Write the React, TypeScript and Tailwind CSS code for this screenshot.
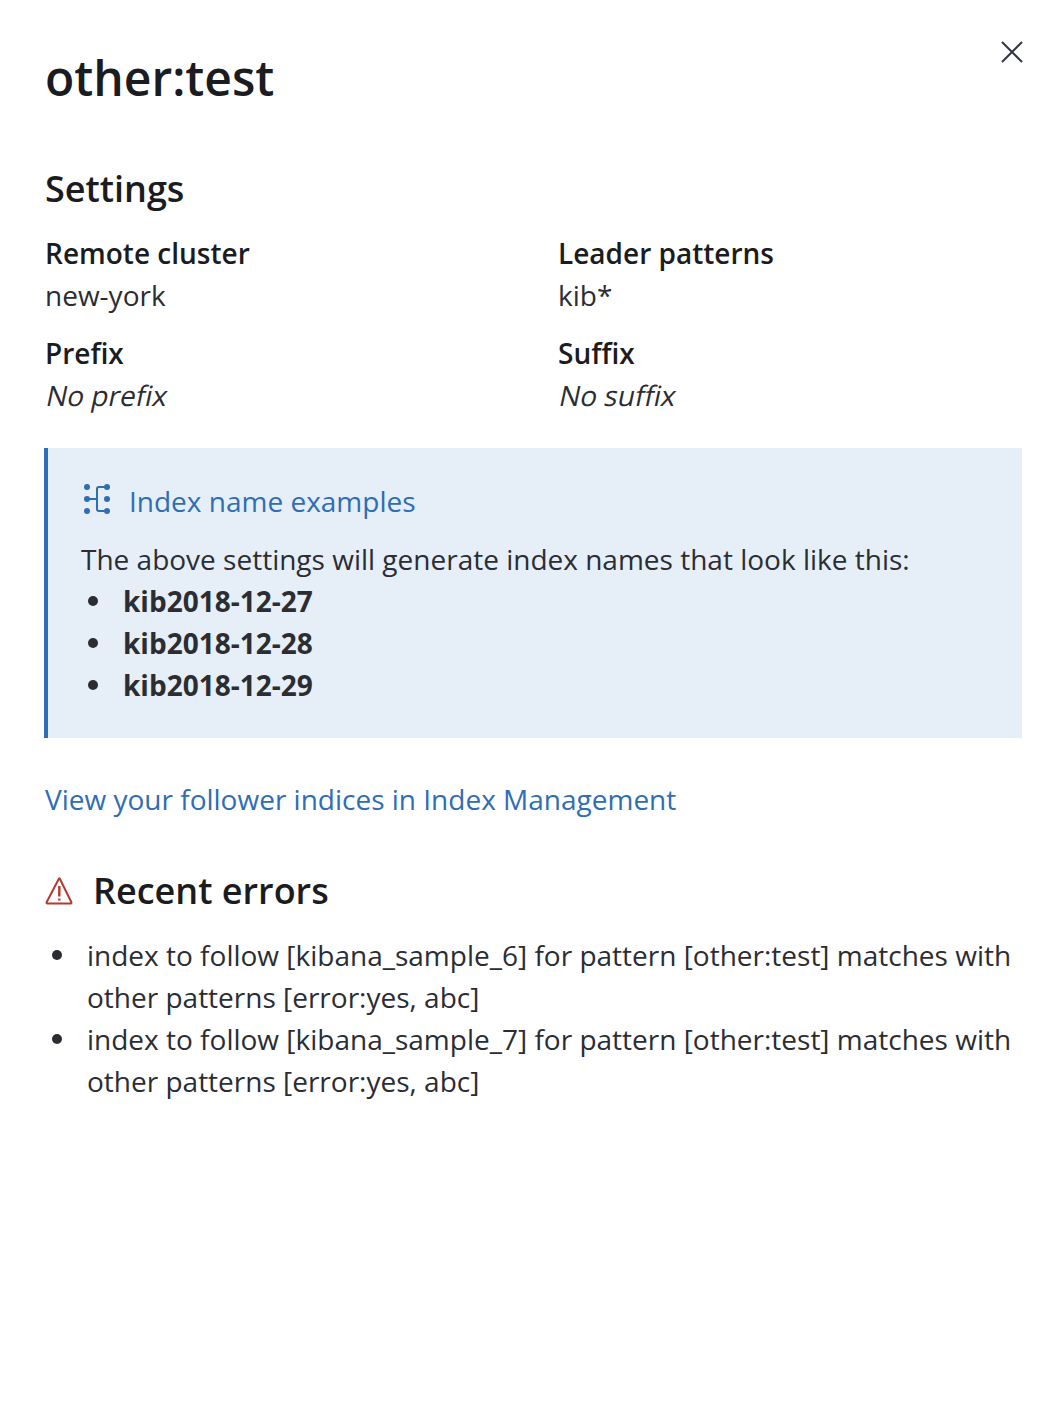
import React from 'react';

const IndexIcon = () => (
  <svg width="32" height="32" viewBox="0 0 32 32" fill="none" className="shrink-0 -translate-y-[2px]">
    <g fill="#2f6db5">
      <circle cx="6" cy="4" r="3" />
      <circle cx="6" cy="16" r="3" />
      <circle cx="6" cy="28" r="3" />
      <circle cx="26" cy="4" r="3" />
      <circle cx="26" cy="16" r="3" />
      <circle cx="26" cy="28" r="3" />
    </g>
    <path d="M6 16h10M26 4h-8a2 2 0 0 0-2 2v20a2 2 0 0 0 2 2h8" stroke="#2f6db5" strokeWidth="2" />
  </svg>
);

const WarningIcon = () => (
  <svg width="30" height="30" viewBox="0 0 30 30" fill="none" className="shrink-0">
    <path d="M14 2.5 1.6 26.2a.8.8 0 0 0 .7 1.2h23.4a.8.8 0 0 0 .7-1.2L14.7 2.5a.4.4 0 0 0-.7 0Z" stroke="#b23a30" strokeWidth="2" strokeLinejoin="round" />
    <path d="M14.3 10v10.5M14.3 22.5v2" stroke="#b23a30" strokeWidth="2.4" />
  </svg>
);

const Field = ({ label, value, empty }: { label: string; value: string; empty?: boolean }) => (
  <div>
    <div className="font-semibold text-[#1a1c21] h-[42px]">{label}</div>
    <div className="h-[42px]">
      {/* the reference slants the upright face, so its width stays upright */}
      {empty ? <span className="ml-[2px] inline-block -skew-x-12">{value}</span> : value}
    </div>
  </div>
);

const Bullet = () => <span className="mt-[16px] h-[10px] w-[10px] shrink-0 rounded-full bg-[#2b2d33]" />;

const errors = ['kibana_sample_6', 'kibana_sample_7'];
const names = ['kib2018-12-27', 'kib2018-12-28', 'kib2018-12-29'];

export default function App() {
  return (
    <div className="relative min-h-[1418px] bg-white pl-[45px] pr-[42px] pt-[43px] text-[28px] leading-[42px] text-[#2b2d33] font-['Open_Sans',sans-serif]">
      <button className="absolute right-[41px] top-[41px] text-[#343741]" aria-label="Close">
        <svg width="22" height="22" viewBox="0 0 22 22" fill="none" className="block">
          <path d="M1 1l20 20M21 1 1 21" stroke="currentColor" strokeWidth="2" />
        </svg>
      </button>

      <h1 className="text-[48px] leading-[70px] font-semibold text-[#1a1c21]">other:test</h1>

      <h2 className="mt-[52px] text-[36px] leading-[48px] font-semibold text-[#1a1c21]">Settings</h2>

      <div className="mt-[19px] grid grid-cols-2 gap-x-[24px] gap-y-[16px] w-[1002px]">
        <Field label="Remote cluster" value="new-york" />
        <Field label="Leader patterns" value="kib*" />
        <Field label="Prefix" value="No prefix" empty />
        <Field label="Suffix" value="No suffix" empty />
      </div>

      <div className="-ml-[1px] mt-[32px] h-[290px] border-l-4 border-[#2f6db5] bg-[#e6eff7] pl-[33px] pt-[32px]">
        <div className="flex items-center gap-[16px] text-[#2f6db5]">
          <IndexIcon />
          <span>Index name examples</span>
        </div>
        <p className="mt-[16px]">The above settings will generate index names that look like this:</p>
        <ul className="pl-[7px] font-bold">
          {names.map((name) => (
            <li key={name} className="flex gap-[25px]">
              <Bullet />
              <span>{name}</span>
            </li>
          ))}
        </ul>
      </div>

      <a href="#" className="mt-[40px] block text-[#2f6db5]">View your follower indices in Index Management</a>

      <div className="mt-[47px] flex items-center gap-[18px]">
        <WarningIcon />
        <h2 className="text-[36px] leading-[48px] font-semibold text-[#1a1c21]">Recent errors</h2>
      </div>

      <ul className="mt-[19px] pl-[7px]">
        {errors.map((name) => (
          <li key={name} className="flex gap-[25px]">
            <Bullet />
            <span>{`index to follow [${name}] for pattern [other:test] matches with other patterns [error:yes, abc]`}</span>
          </li>
        ))}
      </ul>
    </div>
  );
}
